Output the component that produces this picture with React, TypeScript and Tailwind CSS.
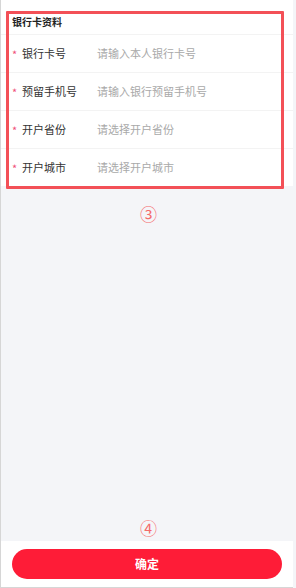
const font = { fontFamily: '"Noto Sans CJK SC", "Noto Sans", sans-serif' };

const rows = [
  { label: '银行卡号', placeholder: '请输入本人银行卡号' },
  { label: '预留手机号', placeholder: '请输入银行预留手机号' },
  { label: '开户省份', placeholder: '请选择开户省份' },
  { label: '开户城市', placeholder: '请选择开户城市' },
];

export default function App() {
  return (
    <div style={font} className="h-[588px] w-[296px] bg-[#f4f5f8] flex flex-col border-l border-[#d6d6d6] overflow-hidden">
      <div className="relative bg-white mr-[3px]">
        <div className="h-[34px] flex items-center pl-[11px] pt-[9px] text-[10px] font-bold text-[#222]">
          银行卡资料
        </div>
        {rows.map((r) => (
          <div key={r.label} className="h-[38px] flex items-center border-t border-[#f3f3f3]">
            <span className="w-[9px] ml-[11px] pt-[2px] text-[#f0507a] text-[11px] leading-none">*</span>
            <span className="w-[75px] ml-[1px] text-[11px] text-[#333]">{r.label}</span>
            <span className="text-[11px] text-[#a9a9a9]">{r.placeholder}</span>
          </div>
        ))}
        <div className="absolute left-[5px] top-[11px] w-[278px] h-[178px] border-[3px] border-[#f35057] rounded-[1px]" />
      </div>
      <div className="mt-[19px] flex justify-center">
        <span className="text-[17px] leading-none text-[#f46a6a]">③</span>
      </div>
      <div className="flex-1" />
      <div className="flex justify-center mb-[5px]">
        <span className="text-[17px] leading-none text-[#f46a6a]">④</span>
      </div>
      <div className="bg-white h-[47px] flex items-center px-[11px] mr-[3px] border-b border-[#d6d6d6]">
        <button className="w-[270px] h-[30px] rounded-full bg-[#fe1c37] text-white text-[12px] font-bold">
          确定
        </button>
      </div>
    </div>
  );
}
